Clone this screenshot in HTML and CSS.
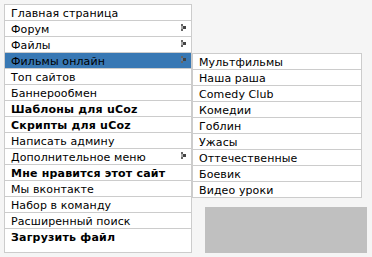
FILE: index.html
```html
<!DOCTYPE html>
<html><head>
	<meta charset="utf-8">
	<title>Меню</title>
	<link rel="stylesheet" href="styles.css">
</head>
<body>
<div class="page">
	<ul class="menu">
		<li><a href="#">Главная страница</a></li>
		<li class="parent"><a href="#">Форум</a><svg class="arrow" width="5" height="7" viewBox="0 0 5 7"><rect x="0" y="0" width="2" height="2" fill="#666"/><rect x="0" y="2" width="2" height="3" fill="#aaa"/><rect x="2" y="2" width="3" height="3" fill="#444"/><rect x="0" y="5" width="2" height="2" fill="#666"/></svg></li>
		<li class="parent"><a href="#">Файлы</a><svg class="arrow" width="5" height="7" viewBox="0 0 5 7"><rect x="0" y="0" width="2" height="2" fill="#666"/><rect x="0" y="2" width="2" height="3" fill="#aaa"/><rect x="2" y="2" width="3" height="3" fill="#444"/><rect x="0" y="5" width="2" height="2" fill="#666"/></svg></li>
		<li class="parent open"><a href="#">Фильмы онлайн</a><svg class="arrow" width="5" height="7" viewBox="0 0 5 7"><rect x="0" y="0" width="2" height="2" fill="#666"/><rect x="0" y="2" width="2" height="3" fill="#5a7fa5"/><rect x="2" y="2" width="3" height="3" fill="#444"/><rect x="0" y="5" width="2" height="2" fill="#666"/></svg>
			<ul class="submenu">
				<li><a href="#">Мультфильмы</a></li>
				<li><a href="#">Наша раша</a></li>
				<li><a href="#">Comedy Club</a></li>
				<li><a href="#">Комедии</a></li>
				<li><a href="#">Гоблин</a></li>
				<li><a href="#">Ужасы</a></li>
				<li><a href="#">Оттечественные</a></li>
				<li><a href="#">Боевик</a></li>
				<li><a href="#">Видео уроки</a></li>
			</ul>
		</li>
		<li><a href="#">Топ сайтов</a></li>
		<li><a href="#">Баннерообмен</a></li>
		<li><a href="#" class="bold">Шаблоны для uCoz</a></li>
		<li><a href="#" class="bold">Скрипты для uCoz</a></li>
		<li><a href="#">Написать админу</a></li>
		<li class="parent"><a href="#">Дополнительное меню</a><svg class="arrow" width="5" height="7" viewBox="0 0 5 7"><rect x="0" y="0" width="2" height="2" fill="#666"/><rect x="0" y="2" width="2" height="3" fill="#aaa"/><rect x="2" y="2" width="3" height="3" fill="#444"/><rect x="0" y="5" width="2" height="2" fill="#666"/></svg></li>
		<li><a href="#" class="bold">Мне нравится этот сайт</a></li>
		<li><a href="#">Мы вконтакте</a></li>
		<li><a href="#">Набор в команду</a></li>
		<li><a href="#">Расширенный поиск</a></li>
		<li><a href="#" class="bold">Загрузить файл</a></li>
	</ul>
	<div class="side">
		<div class="banner"></div>
	</div>
</div>
</body>
</html>
```

FILE: styles.css
```css
body {
	margin: 0;
	padding: 4px;
	background-color: #f5f5f5;
	font-family: "DejaVu Sans", Verdana, sans-serif;
	font-size: 11px;
	color: #000000;
}
.page {
	display: flex;
}
ul {
	list-style: none;
	margin: 0;
	padding: 0;
}
.menu {
	width: 186px;
	border: 1px solid #cccccc;
	background-color: #ffffff;
}
.menu li {
	position: relative;
	display: flex;
	align-items: flex-start;
	height: 13px;
	padding: 2px 0 0 6px;
	line-height: 13px;
}
.menu li + li {
	border-top: 1px solid #cccccc;
}
.menu a {
	flex: 1;
	color: #000000;
	text-decoration: none;
	white-space: nowrap;
	letter-spacing: 0.1px;
}
.menu a.bold {
	font-weight: bold;
	letter-spacing: 0.2px;
}
.arrow {
	margin: 1px 5px 0 0;
}
.menu li.open {
	background-color: #3878b4;
}
.submenu {
	position: absolute;
	top: 0;
	left: calc(100% + 1px);
	width: 168px;
	border: 1px solid #cccccc;
	background-color: #ffffff;
}
.side {
	padding: 203px 0 0 13px;
}
.banner {
	width: 162px;
	height: 46px;
	background-color: #c0c0c0;
}
```
